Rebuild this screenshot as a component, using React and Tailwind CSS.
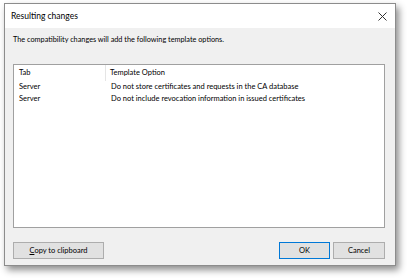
export default function App() {
  const rows = [
    ["Server", "Do not store certificates and requests in the CA database"],
    ["Server", "Do not include revocation information in issued certificates"],
  ];

  return (
    <div className="h-[279px] w-[408px] overflow-hidden bg-white pl-[4px] pt-[3px] font-['Lato',sans-serif] text-black">
      <div className="flex h-[263px] w-[392px] flex-col border border-[#8c8c8c] bg-[#f0f0f0] shadow-[3px_4px_7px_rgba(0,0,0,0.45)]">
        {/* title bar */}
        <div className="flex h-[24px] shrink-0 items-center justify-between bg-white pl-[6px] pr-[8px]">
          <span className="text-[8.5px] leading-none">Resulting changes</span>
          <svg width="9" height="9" viewBox="0 0 9 9" className="text-[#333]">
            <path d="M0.5 0.5 L8.5 8.5 M8.5 0.5 L0.5 8.5" stroke="currentColor" strokeWidth="1" />
          </svg>
        </div>

        <div className="flex flex-1 flex-col px-[8px]">
          <p className="mt-[7px] text-[7.3px] leading-[10px]">
            The compatibility changes will add the following template options.
          </p>

          <div className="mt-[19px] h-[164px] w-[372px] border border-[#a0a0a0] bg-white text-[7.5px]">
            <div className="flex h-[16px] items-center">
              <div className="flex h-full w-[92px] items-center border-r border-[#e5e5e5] pl-[5px]">Tab</div>
              <div className="pl-[4px]">Template Option</div>
            </div>
            {rows.map(([tab, option], i) => (
              <div key={i} className="flex h-[12px] items-center">
                <div className="w-[92px] pl-[5px]">{tab}</div>
                <div className="pl-[5px]">{option}</div>
              </div>
            ))}
          </div>

          <div className="mt-[14px] flex w-[372px] items-center text-[7.5px]">
            <button className="h-[17px] w-[91px] border border-[#adadad] bg-[#e1e1e1]">
              <span className="underline decoration-[0.5px] underline-offset-1">C</span>opy to clipboard
            </button>
            <button className="ml-auto h-[17px] w-[51px] border border-[#0078d7] bg-[#e1e1e1]">OK</button>
            <button className="ml-[3px] h-[17px] w-[52px] border border-[#adadad] bg-[#e1e1e1]">Cancel</button>
          </div>
        </div>
      </div>
    </div>
  );
}
